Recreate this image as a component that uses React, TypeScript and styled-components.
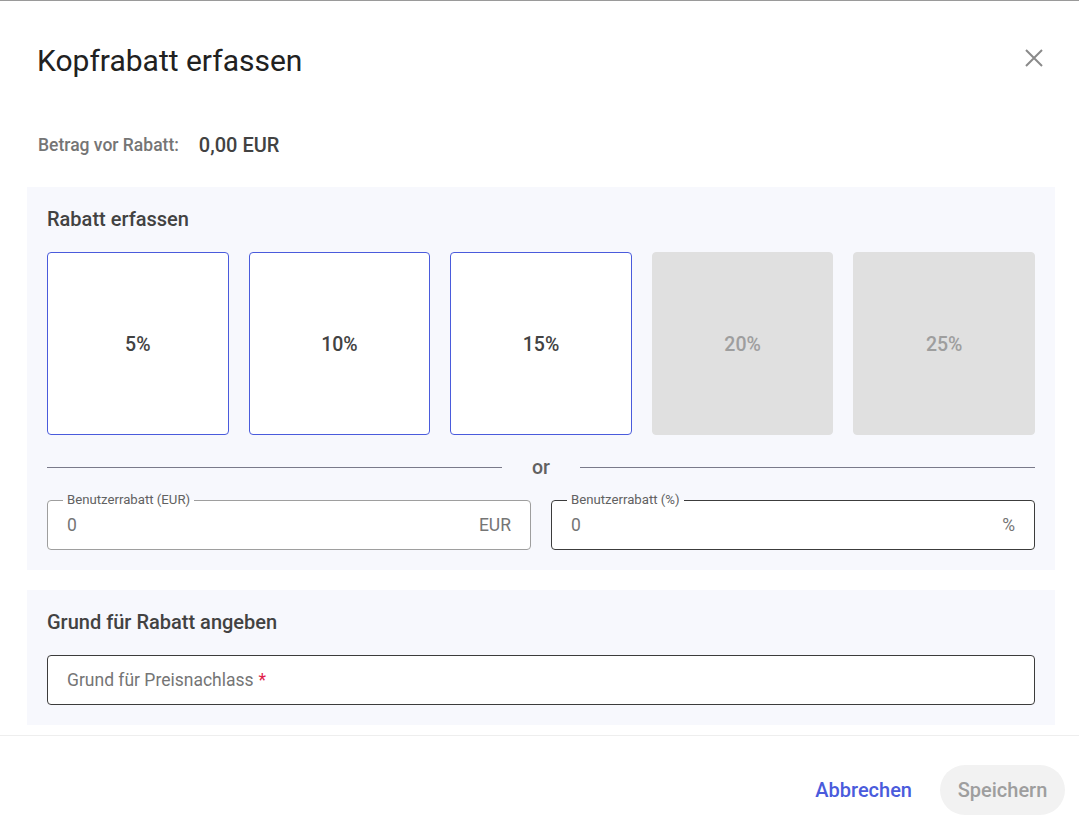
import React from "react";
import styled, { createGlobalStyle } from "styled-components";

const Global = createGlobalStyle`
  html, body { margin: 0; padding: 0; background: #fff; }
  body { font-family: Roboto, "Noto Sans", "Liberation Sans", sans-serif; }
  * { box-sizing: border-box; }
`;

const Dialog = styled.div`
  width: 1079px;
  height: 838px;
  border-top: 1px solid #9a9a9a;
  display: flex;
  flex-direction: column;
  background: #fff;
`;

const Header = styled.div`
  display: flex;
  justify-content: space-between;
  align-items: flex-start;
  padding: 40px 32px 0 37px;
  height: 117px;
`;

const Title = styled.h1`
  margin: 0;
  font-size: 30px;
  font-weight: 400;
  color: #212121;
  line-height: 40px;
`;

const CloseButton = styled.button`
  border: none;
  background: transparent;
  padding: 0;
  width: 26px;
  height: 26px;
  margin-top: 4px;
  display: flex;
  align-items: center;
  justify-content: center;
  cursor: pointer;
`;

const Amount = styled.div`
  display: flex;
  align-items: center;
  gap: 20px;
  padding: 0 0 0 38px;
  height: 54px;
  margin-bottom: 15px;
`;

const AmountLabel = styled.span`
  font-size: 17.5px;
  font-weight: 500;
  color: #757575;
`;

const AmountValue = styled.span`
  font-size: 20px;
  font-weight: 500;
  color: #424242;
`;

const Body = styled.div`
  display: flex;
  flex-direction: column;
  gap: 20px;
  padding: 0 24px 0 27px;
`;

const Section = styled.section`
  background: #f7f8fd;
  padding: 17px 20px 20px 20px;
  display: flex;
  flex-direction: column;
`;

const SectionTitle = styled.h2`
  margin: 0;
  font-size: 20px;
  font-weight: 500;
  color: #424242;
  line-height: 30px;
`;

const Tiles = styled.div`
  display: grid;
  grid-template-columns: repeat(5, 1fr);
  gap: 20px;
  margin-top: 18px;
`;

const Tile = styled.button<{ $disabled?: boolean }>`
  height: 183px;
  border-radius: 4px;
  border: 1px solid ${(p) => (p.$disabled ? "#e0e0e0" : "#4a5bdc")};
  background: ${(p) => (p.$disabled ? "#e0e0e0" : "#fff")};
  color: ${(p) => (p.$disabled ? "#9e9e9e" : "#424242")};
  font-family: inherit;
  font-size: 19.5px;
  font-weight: 500;
  display: flex;
  align-items: center;
  justify-content: center;
  padding: 2px 0 0 0;
`;

const OrRow = styled.div`
  display: flex;
  align-items: center;
  gap: 30px;
  margin-top: 20px;
  height: 24px;
`;

const Line = styled.div`
  flex: 1;
  height: 1px;
  background: #7a7a8a;
`;

const OrText = styled.span`
  font-size: 19.5px;
  font-weight: 500;
  color: #616161;
`;

const Fields = styled.div`
  display: grid;
  grid-template-columns: 1fr 1fr;
  gap: 20px;
  margin-top: 13px;
`;

const Field = styled.fieldset<{ $dark?: boolean }>`
  margin: 0;
  padding: 0 19px;
  border: 1px solid ${(p) => (p.$dark ? "#3c3c3c" : "#9e9e9e")};
  border-radius: 4px;
  background: #fff;
  height: 58px;
  display: flex;
  align-items: center;
  justify-content: space-between;
  min-width: 0;
`;

const Legend = styled.legend`
  font-size: 13.2px;
  color: #616161;
  padding: 0 4px;
  margin-left: -4px;
  line-height: 16px;
`;

const Affix = styled.span`
  font-size: 17.5px;
  color: #757575;
  margin-top: -8px;
`;

const ReasonInput = styled.div`
  margin-top: 18px;
  height: 50px;
  border: 1px solid #3c3c3c;
  border-radius: 4px;
  background: #fff;
  display: flex;
  align-items: center;
  padding: 0 19px;
  font-size: 17.5px;
  color: #757575;
`;

const Required = styled.span`
  color: #e0204a;
  margin-left: 5px;
`;

const Footer = styled.div`
  margin-top: 10px;
  border-top: 1px solid #eeeeee;
  display: flex;
  justify-content: flex-end;
  align-items: center;
  gap: 28px;
  padding: 29px 14px 0 0;
`;

const TextButton = styled.button`
  border: none;
  background: transparent;
  color: #4a5bdc;
  font-family: inherit;
  font-size: 20px;
  font-weight: 500;
  padding: 0;
  cursor: pointer;
`;

const PillButton = styled.button`
  border: none;
  background: #f2f2f2;
  color: #9e9e9e;
  font-family: inherit;
  font-size: 20px;
  font-weight: 500;
  height: 50px;
  padding: 0;
  width: 125px;
  border-radius: 25px;
`;

const tiles = [
  { label: "5%", disabled: false },
  { label: "10%", disabled: false },
  { label: "15%", disabled: false },
  { label: "20%", disabled: true },
  { label: "25%", disabled: true },
];

export default function App() {
  return (
    <>
      <Global />
      <Dialog>
        <Header>
          <Title>Kopfrabatt erfassen</Title>
          <CloseButton aria-label="close">
            <svg width="20" height="20" viewBox="0 0 20 20">
              <path d="M2 2 L18 18 M18 2 L2 18" stroke="#8a8a8a" strokeWidth="2" />
            </svg>
          </CloseButton>
        </Header>
        <Amount>
          <AmountLabel>Betrag vor Rabatt:</AmountLabel>
          <AmountValue>0,00 EUR</AmountValue>
        </Amount>
        <Body>
          <Section>
            <SectionTitle>Rabatt erfassen</SectionTitle>
            <Tiles>
              {tiles.map((t) => (
                <Tile key={t.label} $disabled={t.disabled}>
                  {t.label}
                </Tile>
              ))}
            </Tiles>
            <OrRow>
              <Line />
              <OrText>or</OrText>
              <Line />
            </OrRow>
            <Fields>
              <Field>
                <Legend>Benutzerrabatt (EUR)</Legend>
                <Affix>0</Affix>
                <Affix>EUR</Affix>
              </Field>
              <Field $dark>
                <Legend>Benutzerrabatt (%)</Legend>
                <Affix>0</Affix>
                <Affix>%</Affix>
              </Field>
            </Fields>
          </Section>
          <Section>
            <SectionTitle>Grund für Rabatt angeben</SectionTitle>
            <ReasonInput>
              Grund für Preisnachlass<Required>*</Required>
            </ReasonInput>
          </Section>
        </Body>
        <Footer>
          <TextButton>Abbrechen</TextButton>
          <PillButton>Speichern</PillButton>
        </Footer>
      </Dialog>
    </>
  );
}
